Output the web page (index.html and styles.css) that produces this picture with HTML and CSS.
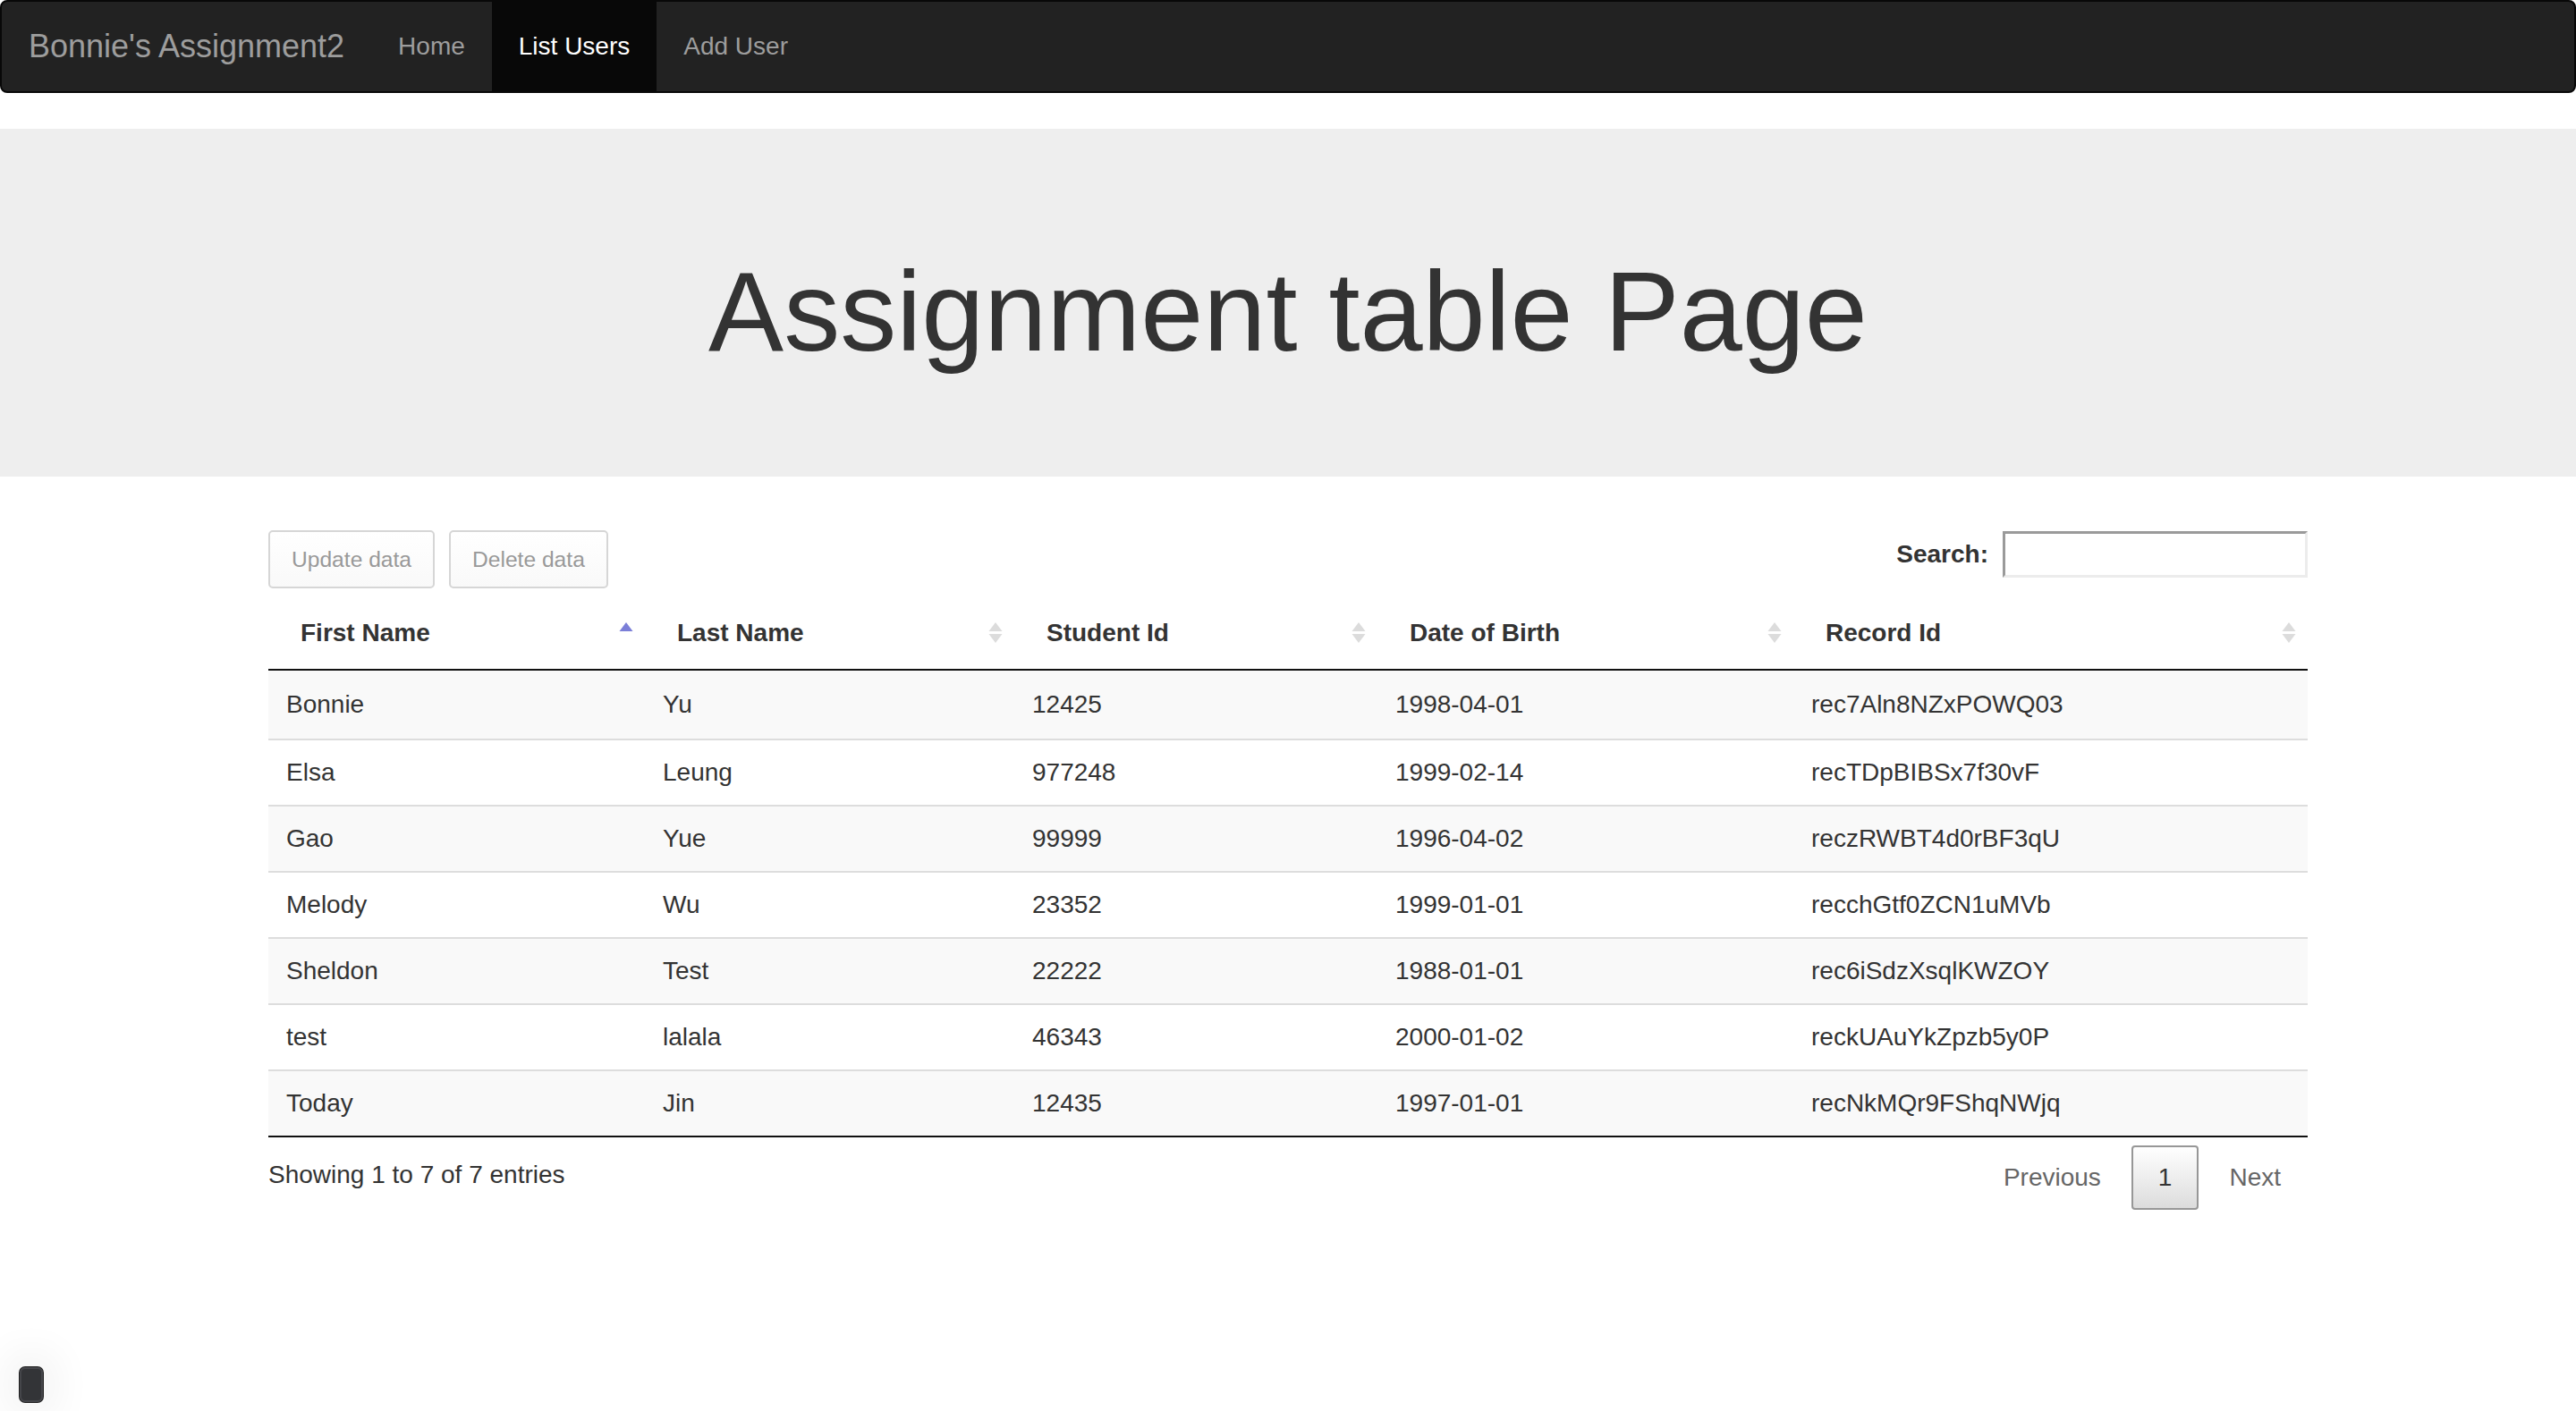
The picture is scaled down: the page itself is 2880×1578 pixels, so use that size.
FILE: index.html
```html
<!DOCTYPE html>
<html lang="en">
<head>
<meta charset="utf-8">
<title>Assignment table Page</title>
<link rel="stylesheet" href="styles.css">
</head>
<body>
<nav class="navbar">
  <a class="brand" href="#">Bonnie's Assignment2</a>
  <ul class="nav">
    <li><a href="#">Home</a></li>
    <li class="active"><a href="#">List Users</a></li>
    <li><a href="#">Add User</a></li>
  </ul>
</nav>

<div class="jumbotron">
  <h1>Assignment table Page</h1>
</div>

<div class="container">
  <div class="dt-top">
    <div class="dt-buttons">
      <button class="dt-button" disabled>Update data</button>
      <button class="dt-button" disabled>Delete data</button>
    </div>
    <label class="dt-filter">Search:<input type="search" class="dt-search"></label>
  </div>

  <table class="data-table">
    <colgroup>
      <col class="c1"><col class="c2"><col class="c3"><col class="c4"><col class="c5">
    </colgroup>
    <thead>
      <tr>
        <th>First Name<svg class="sort" viewBox="0 0 16 26"><polygon class="asc" points="8,1 15.5,11 0.5,11"/></svg></th>
        <th>Last Name<svg class="sort" viewBox="0 0 16 26"><polygon class="up" points="8,1 15.5,11 0.5,11"/><polygon class="down" points="0.5,14 15.5,14 8,24"/></svg></th>
        <th>Student Id<svg class="sort" viewBox="0 0 16 26"><polygon class="up" points="8,1 15.5,11 0.5,11"/><polygon class="down" points="0.5,14 15.5,14 8,24"/></svg></th>
        <th>Date of Birth<svg class="sort" viewBox="0 0 16 26"><polygon class="up" points="8,1 15.5,11 0.5,11"/><polygon class="down" points="0.5,14 15.5,14 8,24"/></svg></th>
        <th>Record Id<svg class="sort" viewBox="0 0 16 26"><polygon class="up" points="8,1 15.5,11 0.5,11"/><polygon class="down" points="0.5,14 15.5,14 8,24"/></svg></th>
      </tr>
    </thead>
    <tbody>
      <tr class="odd"><td>Bonnie</td><td>Yu</td><td>12425</td><td>1998-04-01</td><td>rec7Aln8NZxPOWQ03</td></tr>
      <tr><td>Elsa</td><td>Leung</td><td>977248</td><td>1999-02-14</td><td>recTDpBIBSx7f30vF</td></tr>
      <tr class="odd"><td>Gao</td><td>Yue</td><td>99999</td><td>1996-04-02</td><td>reczRWBT4d0rBF3qU</td></tr>
      <tr><td>Melody</td><td>Wu</td><td>23352</td><td>1999-01-01</td><td>recchGtf0ZCN1uMVb</td></tr>
      <tr class="odd"><td>Sheldon</td><td>Test</td><td>22222</td><td>1988-01-01</td><td>rec6iSdzXsqlKWZOY</td></tr>
      <tr><td>test</td><td>lalala</td><td>46343</td><td>2000-01-02</td><td>reckUAuYkZpzb5y0P</td></tr>
      <tr class="odd"><td>Today</td><td>Jin</td><td>12435</td><td>1997-01-01</td><td>recNkMQr9FShqNWjq</td></tr>
    </tbody>
  </table>

  <div class="dt-bottom">
    <div class="dt-info">Showing 1 to 7 of 7 entries</div>
    <div class="dt-paginate">
      <a class="page-btn disabled">Previous</a>
      <a class="page-btn current">1</a>
      <a class="page-btn disabled">Next</a>
    </div>
  </div>
</div>

<div class="corner-widget"></div>
</body>
</html>
```

FILE: styles.css
```css
* { box-sizing: border-box; }

html, body {
  margin: 0;
  padding: 0;
  background: #fff;
}

body {
  font-family: "Liberation Sans", Arial, Helvetica, sans-serif;
  font-size: 28px;
  line-height: 40px;
  color: #333;
}

a { text-decoration: none; }

/* Navbar */
.navbar {
  display: flex;
  align-items: stretch;
  height: 104px;
  background: #222;
  border: 2px solid #080808;
  border-radius: 8px;
  margin-bottom: 40px;
}

.brand {
  display: block;
  padding: 0 30px;
  font-size: 36px;
  line-height: 100px;
  color: #9d9d9d;
}

.nav {
  display: flex;
  list-style: none;
  margin: 0;
  padding: 0;
}

.nav li a {
  display: block;
  padding: 0 30px;
  font-size: 28px;
  line-height: 100px;
  color: #9d9d9d;
}

.nav li.active a {
  background: #080808;
  color: #fff;
}

/* Jumbotron */
.jumbotron {
  background: #eee;
  padding: 96px 0;
  margin-bottom: 60px;
}

.jumbotron h1 {
  margin: 40px 0 18px;
  font-size: 126px;
  line-height: 1.1;
  font-weight: 400;
  text-align: center;
  color: #333;
}

/* Container */
.container {
  width: 2340px;
  margin: 0 auto;
  padding: 0 30px;
}

.dt-top {
  display: flex;
  justify-content: space-between;
  align-items: flex-start;
}

.dt-buttons {
  display: flex;
  gap: 16px;
  margin-bottom: 10px;
}

.dt-button {
  font-family: inherit;
  font-size: 24.6px;
  line-height: 39px;
  height: 65px;
  padding: 11px 24px;
  color: #999;
  background: linear-gradient(to bottom, #ffffff 0%, #f9f9f9 100%);
  border: 2px solid #d6d6d6;
  border-radius: 5px;
  margin: 0;
}

.dt-filter {
  display: flex;
  align-items: center;
  font-weight: bold;
  font-size: 28px;
  height: 54px;
}

.dt-search {
  width: 341px;
  height: 52px;
  margin-left: 16px;
  border-style: solid;
  border-width: 3px;
  border-color: #9a9a9a #ececec #ececec #9a9a9a;
  background: #fff;
  font-family: inherit;
  font-size: 28px;
  padding: 0 6px;
  outline: none;
}

/* Table */
.data-table {
  width: 2280px;
  table-layout: fixed;
  border-collapse: separate;
  border-spacing: 0;
  border-bottom: 2px solid #111;
}

.c1 { width: 421px; }
.c2 { width: 413px; }
.c3 { width: 406px; }
.c4 { width: 465px; }
.c5 { width: 575px; }

.data-table th {
  position: relative;
  text-align: left;
  font-weight: bold;
  padding: 20px 60px 20px 36px;
  line-height: 40px;
  border-bottom: 2px solid #111;
  color: #333;
}

.sort {
  position: absolute;
  right: 13px;
  top: 50%;
  width: 16px;
  height: 26px;
  margin-top: -13px;
}

.sort .up, .sort .down { fill: #dcdcdc; }
.sort .asc { fill: #7b7fd8; }

.data-table td {
  padding: 16px 20px;
  line-height: 40px;
  border-top: 2px solid #ddd;
  white-space: nowrap;
}

.data-table tbody tr:first-child td {
  border-top: none;
  padding-top: 18px;
  padding-bottom: 18px;
}

.data-table tr.odd td { background: #f9f9f9; }

/* Bottom */
.dt-bottom {
  display: flex;
  justify-content: space-between;
  align-items: flex-start;
}

.dt-info {
  padding-top: 22px;
  line-height: 40px;
}

.dt-paginate {
  display: flex;
  padding-top: 9px;
}

.page-btn {
  display: block;
  padding: 14px 28px;
  margin-left: 4px;
  line-height: 40px;
  border: 2px solid transparent;
  border-radius: 4px;
  color: #333;
  min-width: 42px;
  text-align: center;
}

.page-btn.disabled { color: #666; }

.page-btn.current {
  border-color: #979797;
  background: linear-gradient(to bottom, #ffffff 0%, #dcdcdc 100%);
}

/* bottom-left floating widget */
.corner-widget {
  position: fixed;
  left: 22px;
  top: 1529px;
  width: 26px;
  height: 39px;
  border-radius: 6px;
  background: #333437;
  box-shadow: inset 0 0 0 2px #45464a, 0 0 0 1px #1f1f1f, 0 0 40px 20px rgba(0, 0, 0, 0.04);
}
```
